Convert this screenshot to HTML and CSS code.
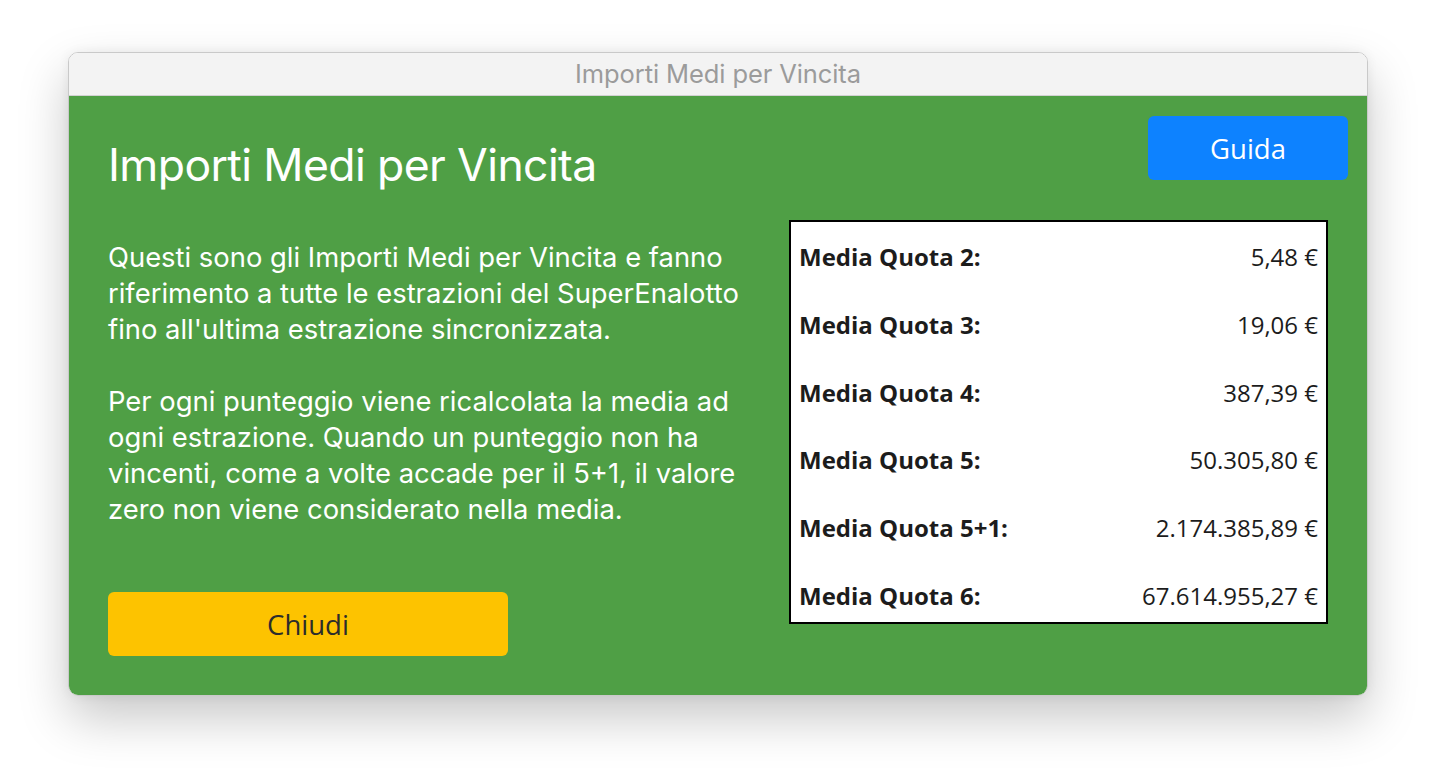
FILE: index.html
```html
<!DOCTYPE html>
<html lang="it">
<head>
<meta charset="utf-8">
<title>Importi Medi per Vincita</title>
<link rel="stylesheet" href="styles.css">
</head>
<body>
<div class="window">
  <div class="titlebar">Importi Medi per Vincita</div>
  <div class="content">
    <div class="left">
      <h1 class="heading">Importi Medi per Vincita</h1>
      <p class="text">Questi sono gli Importi Medi per Vincita e fanno<br>riferimento a tutte le estrazioni del SuperEnalotto<br>fino all'ultima estrazione sincronizzata.</p>
      <p class="text">Per ogni punteggio viene ricalcolata la media ad<br>ogni estrazione. Quando un punteggio non ha<br>vincenti, come a volte accade per il 5+1, il valore<br>zero non viene considerato nella media.</p>
      <button class="btn btn-close">Chiudi</button>
    </div>
    <div class="right">
      <button class="btn btn-help">Guida</button>
      <div class="table">
        <div class="row"><span class="label">Media Quota 2:</span><span class="value">5,48 €</span></div>
        <div class="row"><span class="label">Media Quota 3:</span><span class="value">19,06 €</span></div>
        <div class="row"><span class="label">Media Quota 4:</span><span class="value">387,39 €</span></div>
        <div class="row"><span class="label">Media Quota 5:</span><span class="value">50.305,80 €</span></div>
        <div class="row"><span class="label">Media Quota 5+1:</span><span class="value">2.174.385,89 €</span></div>
        <div class="row"><span class="label">Media Quota 6:</span><span class="value">67.614.955,27 €</span></div>
      </div>
    </div>
  </div>
</div>
</body>
</html>
```

FILE: styles.css
```css
* { box-sizing: border-box; }

html, body {
  margin: 0;
  background: #ffffff;
}

body {
  min-height: 100vh;
  padding: 52px 68px 40px 68px;
  font-family: "Inter", "Roboto", sans-serif;
}

.window {
  width: 1300px;
  height: 644px;
  border-radius: 10px;
  overflow: hidden;
  border: 1px solid #c9c9c9;
  box-shadow: 0 22px 50px rgba(0, 0, 0, 0.22), 0 0 12px rgba(0, 0, 0, 0.06);
  display: flex;
  flex-direction: column;
}

.titlebar {
  height: 43px;
  flex: none;
  background: #f3f3f3;
  border-bottom: 1px solid #d2d2d2;
  color: #9b9b9b;
  font-size: 25.5px;
  line-height: 42px;
  text-align: center;
  letter-spacing: -0.1px;
}

.content {
  flex: 1;
  background: #4f9f45;
  padding: 20px 39px 39px 39px;
  display: grid;
  grid-template-columns: 1fr 539px;
  column-gap: 20px;
}

.right {
  display: flex;
  flex-direction: column;
  align-items: flex-end;
}

.heading {
  margin: 21px 0 0 0;
  color: #ffffff;
  font-weight: 400;
  font-size: 44.5px;
  line-height: 56px;
  letter-spacing: -0.6px;
}

.text {
  margin: 46px -20px 0 0;
  color: #ffffff;
  font-size: 27.4px;
  line-height: 36px;
  letter-spacing: 0;
  white-space: nowrap;
}

.text + .text {
  margin-top: 36px;
}

.btn {
  border: none;
  border-radius: 6px;
  font-family: "Open Sans", sans-serif;
  font-size: 27.5px;
  height: 64px;
  padding: 0;
  cursor: pointer;
}

.btn-close {
  margin-top: 65px;
  width: 400px;
  background: #fdc300;
  color: #2c2c2c;
}

.btn-help {
  width: 200px;
  margin-right: -20px;
  background: #0d82ff;
  color: #ffffff;
}

.table {
  margin-top: 40px;
  width: 539px;
  height: 404px;
  background: #ffffff;
  border: 2px solid #000000;
  padding: 19px 8px 9px 8px;
  display: flex;
  flex-direction: column;
  gap: 35.8px;
  font-family: "Open Sans", sans-serif;
  font-size: 24px;
  color: #1c1c1c;
}

.row {
  display: flex;
  justify-content: space-between;
  line-height: 32px;
}

.label {
  font-weight: 700;
}
```
